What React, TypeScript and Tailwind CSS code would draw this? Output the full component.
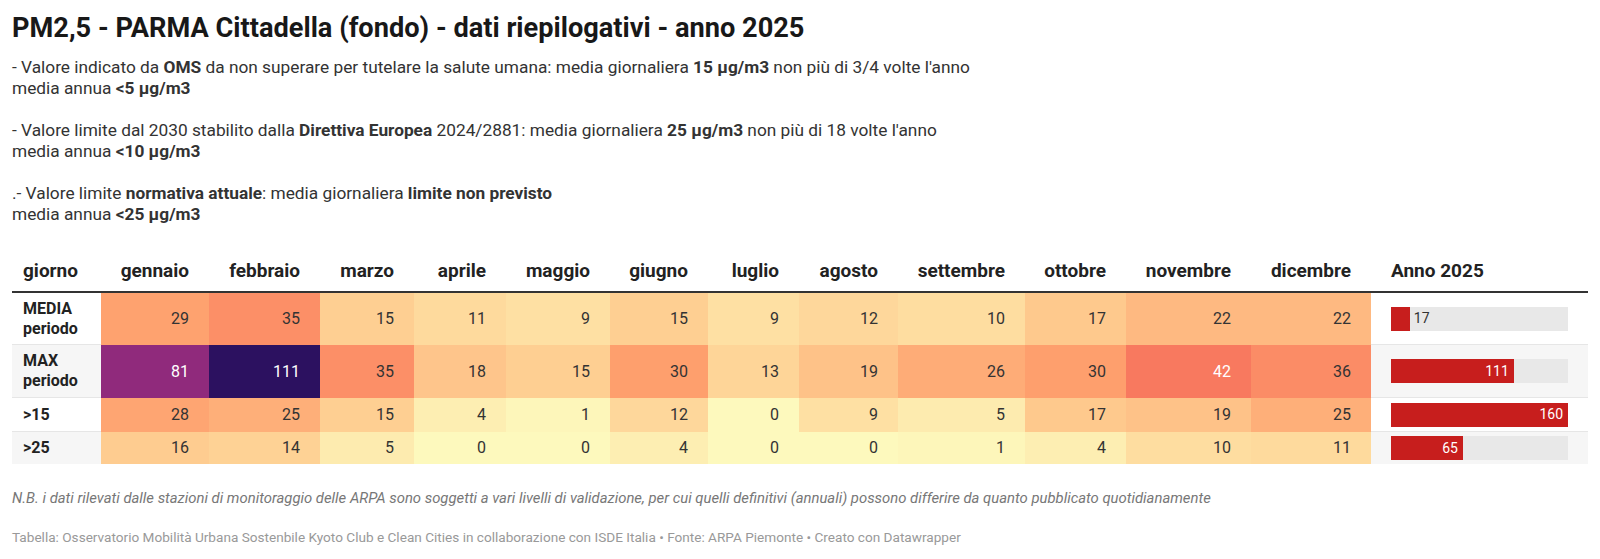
import React from "react"

// magma-ish scale, reversed (light = low)
const stops = [
  [0xfd, 0xf9, 0xbd],
  [0xfe, 0xcf, 0x92],
  [0xfe, 0x9f, 0x6d],
  [0xf7, 0x70, 0x5c],
  [0xde, 0x49, 0x68],
  [0xb7, 0x37, 0x79],
  [0x8c, 0x29, 0x81],
]

function cellColor(v: number) {
  if (v >= 100) return "#2c1160"
  if (v >= 70) return "#902a7c"
  const p = Math.min(v / 150, 0.6) * 10
  const i = Math.min(Math.floor(p), stops.length - 2)
  const f = p - i
  const c = stops[i].map((a, k) => Math.round(a + (stops[i + 1][k] - a) * f))
  return `rgb(${c[0]}, ${c[1]}, ${c[2]})`
}

const months = [
  "gennaio",
  "febbraio",
  "marzo",
  "aprile",
  "maggio",
  "giugno",
  "luglio",
  "agosto",
  "settembre",
  "ottobre",
  "novembre",
  "dicembre",
]

const rows = [
  { label: ["MEDIA", "periodo"], values: [29, 35, 15, 11, 9, 15, 9, 12, 10, 17, 22, 22], total: 17, h: "h-[52px]", shaded: false },
  { label: ["MAX", "periodo"], values: [81, 111, 35, 18, 15, 30, 13, 19, 26, 30, 42, 36], total: 111, h: "h-[53px]", shaded: true },
  { label: [">15"], values: [28, 25, 15, 4, 1, 12, 0, 9, 5, 17, 19, 25], total: 160, h: "h-[34px]", shaded: false },
  { label: [">25"], values: [16, 14, 5, 0, 0, 4, 0, 0, 1, 4, 10, 11], total: 65, h: "h-[32px]", shaded: true },
]

const cols = "grid grid-cols-[89px_108px_111px_94px_92px_104px_98px_91px_99px_127px_101px_125px_120px_217px]"

function Bar({ value }: { value: number }) {
  const w = (value / 160) * 177
  const inside = w > 40
  return (
    <div className="relative h-[24px] w-[177px] bg-[#e8e8e8]">
      <div className="flex h-full items-center justify-end bg-[#c71e1d] pr-[5px] text-[14px] text-white" style={{ width: w }}>
        {inside && value}
      </div>
      {!inside && (
        <span className="absolute top-0 flex h-full items-center text-[14px] text-[#333]" style={{ left: w + 4 }}>
          {value}
        </span>
      )}
    </div>
  )
}

export default function App() {
  return (
    <div className="min-h-screen bg-white px-[12px] pt-[12px] font-['Roboto',sans-serif] text-[#333]">
      <h1 className="text-[27.2px] leading-[32px] font-bold text-[#181818]">
        PM2,5 - PARMA Cittadella (fondo) - dati riepilogativi - anno 2025
      </h1>

      <div className="mt-[13px] text-[17.3px] leading-[21px] text-[#333]">
        <p>
          - Valore indicato da <b>OMS</b> da non superare per tutelare la salute umana: media giornaliera <b>15 μg/m3</b> non più di 3/4 volte l'anno
        </p>
        <p>
          media annua <b>&lt;5 μg/m3</b>
        </p>
        <p className="mt-[21px]">
          - Valore limite dal 2030 stabilito dalla <b>Direttiva Europea</b> 2024/2881: media giornaliera <b>25 μg/m3</b> non più di 18 volte l'anno
        </p>
        <p>
          media annua <b>&lt;10 μg/m3</b>
        </p>
        <p className="mt-[21px]">
          .- Valore limite <b>normativa attuale</b>: media giornaliera <b>limite non previsto</b>
        </p>
        <p>
          media annua <b>&lt;25 μg/m3</b>
        </p>
      </div>

      <div className="mt-[36px] w-[1576px]">
        <div className={`${cols} border-b-2 border-[#333] pb-[10px] text-[19px] leading-[20px] font-bold text-[#222]`}>
          <div className="pl-[11px]">giorno</div>
          {months.map((m) => (
            <div key={m} className="pr-[20px] text-right">
              {m}
            </div>
          ))}
          <div className="pl-[20px]">Anno 2025</div>
        </div>

        {rows.map((r, ri) => (
          <div key={ri} className={`${cols} ${r.h}`}>
            <div
              className={`flex flex-col justify-center pl-[11px] text-[16px] leading-[20px] font-bold text-[#222] ${
                r.shaded ? "bg-[#f6f6f6]" : "bg-white"
              } ${ri < rows.length - 1 ? "border-b border-[#e6e6e6]" : ""}`}
            >
              {r.label.map((l) => (
                <span key={l}>{l}</span>
              ))}
            </div>
            {r.values.map((v, i) => (
              <div
                key={i}
                className={`flex items-center justify-end pr-[20px] text-[16px] ${v >= 40 ? "text-white" : "text-[#333]"}`}
                style={{ backgroundColor: cellColor(v) }}
              >
                {v}
              </div>
            ))}
            <div
              className={`flex items-center pl-[20px] ${r.shaded ? "bg-[#f6f6f6]" : "bg-white"} ${
                ri < rows.length - 1 ? "border-b border-[#e6e6e6]" : ""
              }`}
            >
              <Bar value={r.total} />
            </div>
          </div>
        ))}
      </div>

      <p className="mt-[24px] text-[14.85px] leading-[20px] text-[#777] italic">
        N.B. i dati rilevati dalle stazioni di monitoraggio delle ARPA sono soggetti a vari livelli di validazione, per cui quelli definitivi (annuali) possono differire da quanto pubblicato quotidianamente
      </p>

      <p className="mt-[21px] text-[13.6px] leading-[17px] text-[#999]">
        Tabella: Osservatorio Mobilità Urbana Sostenbile Kyoto Club e Clean Cities in collaborazione con ISDE Italia • Fonte: ARPA Piemonte • Creato con Datawrapper
      </p>
    </div>
  )
}
